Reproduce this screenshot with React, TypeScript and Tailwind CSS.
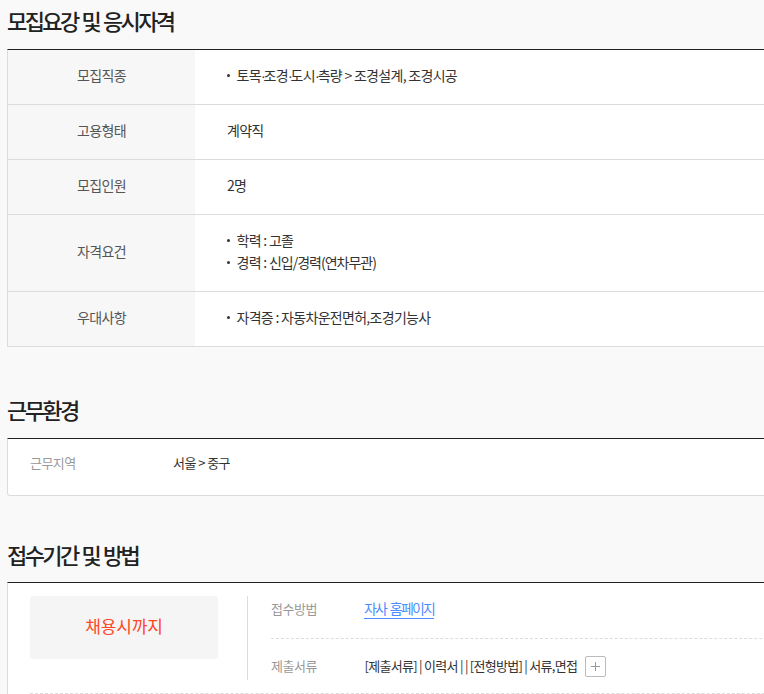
const font = { fontFamily: '"Noto Sans CJK KR", "Noto Sans", sans-serif' };

function Bullet({ children }: { children: React.ReactNode }) {
  return (
    <li className="flex items-center h-[22px]">
      <span className="w-[3px] h-[3px] rounded-full bg-[#333] mr-[7px]" />
      <span className="-ml-[0.5px]">{children}</span>
    </li>
  );
}

function Dot() {
  return <span className="font-['Liberation_Sans'] tracking-[-2px]">·</span>;
}

function Row({ label, children, h, last }: { label: string; children: React.ReactNode; h: string; last?: boolean }) {
  return (
    <div className={`flex ${h} ${last ? "" : "border-b border-[#dcdcdc]"}`}>
      <div className="w-[187px] shrink-0 bg-[#f7f7f7] flex items-center justify-center pb-[3px] text-[14px] text-[#555] tracking-[-0.6px]">
        {label}
      </div>
      <div className="flex-1 bg-white pl-[32px] pb-[3px] flex flex-col justify-center text-[14px] text-[#333] tracking-[-0.7px]">
        {children}
      </div>
    </div>
  );
}

function Heading({ children, className }: { children: React.ReactNode; className: string }) {
  return <h2 className={`text-[22px] leading-[30px] font-medium text-[#222] tracking-[-2.6px] [word-spacing:1.5px] ${className}`}>{children}</h2>;
}

export default function App() {
  return (
    <div style={font} className="w-[764px] h-[694px] overflow-hidden bg-[#f9f9f9]">
      <div className="w-[820px] pl-[7px]">
        <Heading className="pt-[5px] h-[49px]">모집요강 및 응시자격</Heading>
        <div className="border-t border-l border-b border-[#dcdcdc] border-t-[#222]">
          <Row label="모집직종" h="h-[55px]">
            <ul>
              <Bullet>
                토목<Dot />조경<Dot />도시<Dot />측량 &gt; 조경설계, 조경시공
              </Bullet>
            </ul>
          </Row>
          <Row label="고용형태" h="h-[55px]">계약직</Row>
          <Row label="모집인원" h="h-[55px]">2명</Row>
          <Row label="자격요건" h="h-[77px]">
            <ul>
              <Bullet>학력 : 고졸</Bullet>
              <Bullet>
                경력 : <span className="tracking-[-1px]">신입/경력(연차무관)</span>
              </Bullet>
            </ul>
          </Row>
          <Row label="우대사항" h="h-[54px]" last>
            <ul><Bullet>자격증 : 자동차운전면허,조경기능사</Bullet></ul>
          </Row>
        </div>

        <Heading className="mt-[47px] h-[44px]">근무환경</Heading>
        <div className="h-[58px] bg-white border-t border-l border-b border-[#dcdcdc] border-t-[#222] rounded-bl-[3px] flex items-start pt-[14px] pl-[22px] text-[13px] tracking-[-0.55px]">
          <span className="w-[143px] text-[#999]">근무지역</span>
          <span className="text-[#333]">서울 &gt; 중구</span>
        </div>

        <Heading className="mt-[29px] h-[57px] pt-[14px]">접수기간 및 방법</Heading>
        <div className="bg-white border-t border-l border-[#dcdcdc] border-t-[#222] h-[120px] pl-[22px] pt-[13px]">
          <div className="flex">
            <div className="w-[188px] h-[63px] rounded-[3px] bg-[#f5f5f5] flex items-center justify-center pb-[3px] text-[17px] text-[#ff4526] tracking-[-0.1px]">
              채용시까지
            </div>
            <div className="ml-[29px] h-[84px] border-l border-[#dcdcdc] pl-[23px] w-[560px] text-[13px] tracking-[-0.5px]">
              <div className="h-[43px] border-b border-dashed border-[#dcdcdc] flex items-start pt-[3px]">
                <span className="w-[93px] text-[#999]">접수방법</span>
                <span className="h-[20px] text-[14px] text-[#4c8dff] border-b border-[#4c8dff] leading-[18px] tracking-[-1.85px] [word-spacing:2.5px]">자사 홈페이지</span>
              </div>
              <div className="flex items-center h-[54px]">
                <span className="w-[94px] text-[#999]">제출서류</span>
                <span className="text-[#333] tracking-[-0.72px] -ml-[0.5px]">[제출서류] | 이력서 | | [전형방법] | 서류,면접</span>
                <span className="ml-[8px] w-[21px] h-[21px] border border-[#bbb] rounded-[2px] flex items-center justify-center">
                  <svg width="11" height="11" viewBox="0 0 11 11"><path d="M5.5 1v9M1 5.5h9" stroke="#999" strokeWidth="1" /></svg>
                </span>
              </div>
            </div>
          </div>
          <div className="mt-[13px] border-t border-dashed border-[#dcdcdc]" />
        </div>
      </div>
    </div>
  );
}
